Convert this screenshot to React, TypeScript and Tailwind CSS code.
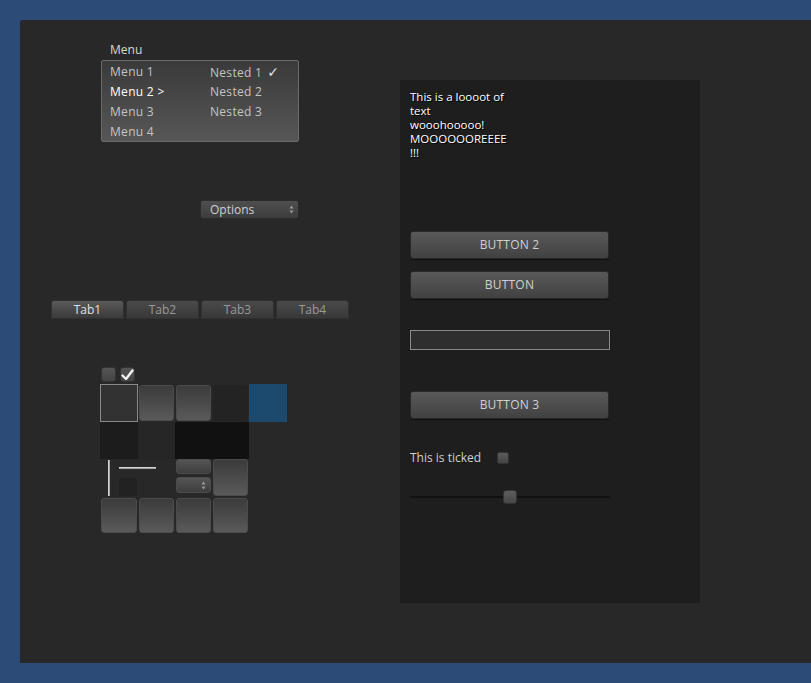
import React from 'react';

const font = "font-['Open_Sans','DejaVu_Sans',sans-serif]";

const Arrows = () => (
  <svg width="5" height="9" viewBox="0 0 5 9" className="shrink-0">
    <path d="M2.5 0.5 L4.5 3.5 L0.5 3.5 Z" fill="#9a9a9a" />
    <path d="M2.5 8.5 L4.5 5.5 L0.5 5.5 Z" fill="#9a9a9a" />
  </svg>
);

const Cell = ({ className = '' }: { className?: string }) => (
  <div
    className={`rounded-[3px] border border-[#4c4c4c] bg-gradient-to-b from-[#3b3b3b] to-[#5a5a5a] ${className}`}
  />
);

const Btn = ({ label }: { label: string }) => (
  <button className="w-[199px] h-[28px] rounded-[3px] border border-[#2a2a2a] bg-gradient-to-b from-[#595959] to-[#414141] text-[12px] text-[#d0d0d0] tracking-[0.2px] shadow-[0_1px_1px_rgba(0,0,0,0.5)]">
    {label}
  </button>
);

const App: React.FC = () => {
  const menuRows = [
    { left: 'Menu 1', right: 'Nested 1', check: true },
    { left: 'Menu 2 >', right: 'Nested 2', active: true },
    { left: 'Menu 3', right: 'Nested 3' },
    { left: 'Menu 4', right: '' },
  ];

  return (
    <div className={`w-[811px] h-[683px] bg-[#2d4b77] pt-[20px] pl-[20px] ${font} overflow-hidden`}>
      <div className="h-[643px] bg-[#282828] rounded-tl-[3px] flex">
        {/* Left column */}
        <div className="w-[380px] pl-[30px] flex flex-col">
          <div className="mt-[20px] pl-[60px] h-[20px] leading-[20px] text-[12px] text-[#d8d8d8]">Menu</div>

          {/* Menu dropdown */}
          <div className="ml-[51px] w-[198px] h-[82px] border border-[#6a6a6a] rounded-[2px] bg-gradient-to-b from-[#3a3a3a] to-[#575757] pt-[1px]">
            {menuRows.map((r) => (
              <div key={r.left} className="flex h-[20px] leading-[20px] text-[12px] tracking-[0.3px]">
                <span className={`w-[108px] pl-[8px] ${r.active ? 'text-white' : 'text-[#c4c4c4]'}`}>{r.left}</span>
                <span className="text-[#c4c4c4]">
                  {r.right}
                  {r.check && <span className="ml-[5px] text-[14px] text-[#e0e0e0]">✓</span>}
                </span>
              </div>
            ))}
          </div>

          {/* Options popup */}
          <div className="mt-[58px] ml-[150px] w-[99px] h-[19px] rounded-[3px] border border-[#2b2b2b] bg-gradient-to-b from-[#4f4f4f] to-[#3c3c3c] flex items-center justify-between pl-[9px] pr-[4px]">
            <span className="text-[12px] text-[#d0d0d0] leading-none">Options</span>
            <Arrows />
          </div>

          {/* Tabs */}
          <div className="mt-[81px] ml-[1px] flex gap-[2px]">
            {['Tab1', 'Tab2', 'Tab3', 'Tab4'].map((t, i) => (
              <div
                key={t}
                className={`w-[73px] h-[19px] rounded-t-[3px] border border-[#303030] flex items-center justify-center text-[12px] ${
                  i === 0
                    ? 'bg-gradient-to-b from-[#5a5a5a] to-[#3a3a3a] text-[#e0e0e0]'
                    : 'bg-gradient-to-b from-[#4a4a4a] to-[#383838] text-[#9a9a9a]'
                }`}
              >
                {t}
              </div>
            ))}
          </div>

          {/* Checkboxes */}
          <div className="mt-[48px] ml-[51px] flex gap-[4px]">
            <div className="w-[15px] h-[15px] rounded-[3px] border border-[#333] bg-gradient-to-b from-[#555] to-[#444]" />
            <div className="w-[15px] h-[15px] rounded-[3px] border border-[#333] bg-gradient-to-b from-[#555] to-[#444] flex items-center justify-center">
              <svg width="13" height="12" viewBox="0 0 13 12">
                <path d="M1.5 6.5 L5 10 L11.5 1.5" stroke="#f2f2f2" strokeWidth="2.4" fill="none" strokeLinecap="round" strokeLinejoin="round" />
              </svg>
            </div>
          </div>

          {/* Widget grid */}
          <div className="mt-[2px] ml-[50px] grid grid-cols-[38px_37px_37px_37px_38px] grid-rows-[38px_37px_38px_37px]">
            <div className="border border-[#8a8a8a] bg-[#323232]" />
            <Cell className="m-[1px]" />
            <Cell className="m-[1px]" />
            <div className="m-[1px] rounded-[3px] bg-[#232323]" />
            <div className="bg-[#1c4a6e]" />

            <div className="bg-[#1c1c1c]" />
            <div className="bg-[#262626]" />
            <div className="col-span-2 bg-[#111111]" />
            <div />

            <div className="relative">
              <div className="absolute left-[8px] top-[1px] w-[2px] h-[36px] bg-gradient-to-r from-[#eaeaea] to-[#8c8c8c]" />
              <div className="absolute left-[19px] top-[8px] w-[37px] h-[2px] bg-gradient-to-b from-[#eaeaea] to-[#8c8c8c]" />
              <div className="absolute left-[19px] top-[19px] w-[18px] h-[18px] bg-[#222222]" />
            </div>
            <div />
            <div className="flex flex-col gap-[3px] p-[1px] pt-[0px]">
              <div className="h-[15px] rounded-[3px] border border-[#4c4c4c] bg-gradient-to-b from-[#555] to-[#3e3e3e]" />
              <div className="h-[16px] rounded-[3px] border border-[#4c4c4c] bg-gradient-to-b from-[#555] to-[#3e3e3e] flex items-center justify-end pr-[4px]">
                <Arrows />
              </div>
            </div>
            <Cell className="m-[1px] mt-0" />
            <div />

            <Cell className="m-[1px]" />
            <Cell className="m-[1px]" />
            <Cell className="m-[1px]" />
            <Cell className="m-[1px]" />
            <div />
          </div>
        </div>

        {/* Right panel */}
        <div className="mt-[60px] w-[300px] h-[523px] bg-[#1e1e1e] pl-[10px] pt-[10px] flex flex-col">
          <div className="text-[11.5px] leading-[14px] text-white [text-shadow:1px_1px_0_#000] w-[110px]">
            <div>This is a loooot of</div>
            <div>text</div>
            <div>wooohooooo!</div>
            <div>MOOOOOOREEEE</div>
            <div>!!!</div>
          </div>
          <div className="mt-[71px]">
            <Btn label="BUTTON 2" />
          </div>
          <div className="mt-[12px]">
            <Btn label="BUTTON" />
          </div>
          <div className="mt-[31px] w-[200px] h-[20px] border border-[#8a8a8a] bg-[#2e2e2e]" />
          <div className="mt-[41px]">
            <Btn label="BUTTON 3" />
          </div>
          <div className="mt-[31px] flex items-center h-[16px]">
            <span className="text-[12px] text-[#cfcfcf] w-[87px]">This is ticked</span>
            <div className="w-[12px] h-[12px] rounded-[2px] border border-[#333] bg-gradient-to-b from-[#5a5a5a] to-[#454545]" />
          </div>
          <div className="mt-[23px] relative w-[200px] h-[16px] flex items-center">
            <div className="w-full h-[2px] bg-[#111111]" />
            <div className="absolute left-[93px] top-[1px] w-[14px] h-[14px] rounded-[3px] border border-[#333] bg-gradient-to-b from-[#5e5e5e] to-[#464646]" />
          </div>
        </div>
      </div>
    </div>
  );
};

export default App;
